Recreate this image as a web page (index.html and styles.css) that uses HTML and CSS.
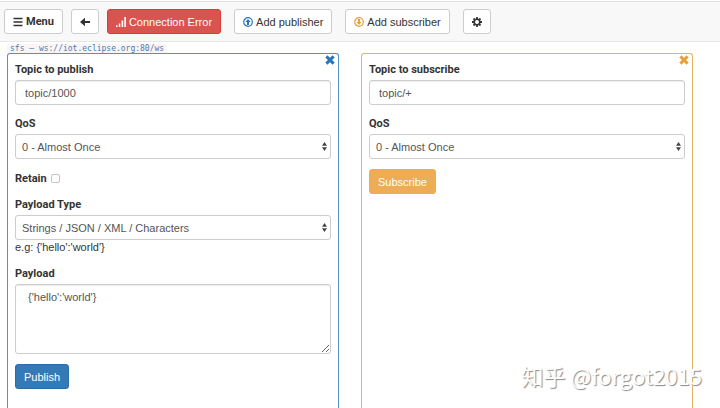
FILE: index.html
```html
<!DOCTYPE html>
<html lang="en">
<head>
  <meta charset="UTF-8" />
  <meta name="viewport" content="width=device-width, initial-scale=1.0" />
  <title>MQTT Client</title>
  <link rel="stylesheet" href="styles.css">
</head>
<body>
<nav class="toolbar">
  <button type="button" class="btn btn-bold">
    <svg class="icon" viewBox="0 0 10 10"><path d="M0.5 1.5h9M0.5 5h9M0.5 8.5h9" stroke="currentColor" stroke-width="1.5" /></svg>
    Menu
  </button>
  <button type="button" class="btn btn-back" aria-label="Back">
    <svg class="icon" viewBox="0 0 10 10"><path d="M0 5L5 0.8V3.9H10V6.1H5V9.2Z" fill="currentColor" /></svg>
  </button>
  <button type="button" class="btn btn-danger">
    <svg class="icon" viewBox="0 0 10 10"><path d="M0 8.2h1.5V10H0zM2.8 6.4h1.5V10H2.8zM5.6 3.6h1.6V10H5.6zM8.3 0H10v10H8.3z" fill="currentColor" /></svg>
    Connection Error
  </button>
  <button type="button" class="btn btn-add">
    <svg class="icon blue" viewBox="0 0 10 10"><circle cx="5" cy="5" r="4.3" fill="none" stroke="currentColor" stroke-width="1.2" /><path d="M5 1.9L7.6 5H6V7.9H4V5H2.4Z" fill="currentColor" /></svg>
    Add publisher
  </button>
  <button type="button" class="btn btn-add">
    <svg class="icon orange" viewBox="0 0 10 10"><circle cx="5" cy="5" r="4.3" fill="none" stroke="currentColor" stroke-width="1.2" /><path d="M5 8.1L7.6 5H6V2.1H4V5H2.4Z" fill="currentColor" /></svg>
    Add subscriber
  </button>
  <button type="button" class="btn btn-add" aria-label="Settings">
    <svg class="icon" viewBox="0 0 10 10"><circle cx="5" cy="5" r="2.8" fill="none" stroke="currentColor" stroke-width="1.6" /><path d="M5 0v2M5 8v2M0 5h2M8 5h2M1.5 1.5l1.3 1.3M7.2 7.2l1.3 1.3M8.5 1.5L7.2 2.8M2.8 7.2L1.5 8.5" stroke="currentColor" stroke-width="1.8" /></svg>
  </button>
</nav>

<div class="broker"><code>sfs – ws://iot.eclipse.org:80/ws</code></div>

<main class="panels">
  <!-- Publisher -->
  <form class="panel panel-pub">
    <button type="button" class="close blue" aria-label="Remove publisher">
      <svg class="icon" viewBox="0 0 10 10"><path d="M1.4 1.4L8.6 8.6M8.6 1.4L1.4 8.6" stroke="currentColor" stroke-width="3" /></svg>
    </button>
    <div class="group">
      <label for="pubTopic">Topic to publish</label>
      <input type="text" id="pubTopic" class="control" value="topic/1000" />
    </div>
    <div class="group">
      <label for="pubQos">QoS</label>
      <div class="select">
        <select id="pubQos" class="control">
          <option>0 - Almost Once</option>
          <option>1 - Atleast Once</option>
          <option>2 - Exactly Once</option>
        </select>
        <svg class="arrows" viewBox="0 0 5 9"><path d="M0 3.8L2.5 0L5 3.8ZM0 5.2L2.5 9L5 5.2Z" /></svg>
      </div>
    </div>
    <div class="check-row">
      <label for="retain">Retain</label>
      <input type="checkbox" id="retain" class="check" />
    </div>
    <div class="group">
      <label for="payloadType">Payload Type</label>
      <div class="select">
        <select id="payloadType" class="control">
          <option>Strings / JSON / XML / Characters</option>
        </select>
        <svg class="arrows" viewBox="0 0 5 9"><path d="M0 3.8L2.5 0L5 3.8ZM0 5.2L2.5 9L5 5.2Z" /></svg>
      </div>
      <div class="hint">e.g: {'hello':'world'}</div>
    </div>
    <div class="group">
      <label for="payload">Payload</label>
      <textarea id="payload" class="control">{'hello':'world'}</textarea>
    </div>
    <button type="button" class="btn btn-primary">Publish</button>
  </form>

  <!-- Subscriber -->
  <form class="panel panel-sub">
    <button type="button" class="close orange" aria-label="Remove subscriber">
      <svg class="icon" viewBox="0 0 10 10"><path d="M1.4 1.4L8.6 8.6M8.6 1.4L1.4 8.6" stroke="currentColor" stroke-width="3" /></svg>
    </button>
    <div class="group">
      <label for="subTopic">Topic to subscribe</label>
      <input type="text" id="subTopic" class="control" value="topic/+" />
    </div>
    <div class="group">
      <label for="subQos">QoS</label>
      <div class="select">
        <select id="subQos" class="control">
          <option>0 - Almost Once</option>
          <option>1 - Atleast Once</option>
          <option>2 - Exactly Once</option>
        </select>
        <svg class="arrows" viewBox="0 0 5 9"><path d="M0 3.8L2.5 0L5 3.8ZM0 5.2L2.5 9L5 5.2Z" /></svg>
      </div>
    </div>
    <button type="button" class="btn btn-warning">Subscribe</button>
  </form>
</main>

<div class="watermark">知乎 @forgot2015</div>
</body>
</html>
```
FILE: styles.css
```css
* { box-sizing: border-box; }
body { font: 11px/16px "Liberation Sans", Arial, sans-serif; color: #333; background: white; margin: 0; min-height: 100vh; display: flex; flex-direction: column; position: relative; }
button, input, select, textarea { font: inherit; }
.blue { color: #2a75b8; }
.orange { color: #e8a03c; }

/* toolbar */
.toolbar { display: flex; align-items: center; height: 41px; margin-top: 1px; padding: 0 4px; background: #f8f8f8; border-top: 1px solid #e0e0e0; border-bottom: 1px solid #e7e7e7; }
.btn { display: inline-flex; align-items: center; gap: 3px; height: 25px; padding: 0 8px; color: #333; background: white; border: 1px solid #ccc; border-radius: 3px; cursor: pointer; white-space: nowrap; }
.icon { width: 10px; height: 10px; display: block; flex: none; }
.btn-bold { font-family: Roboto, sans-serif; font-weight: bold; }
.btn-back { margin: 0 8px; }
.btn-add { margin-left: 13px; }
.btn-danger { color: white; background: #d9534f; border-color: #d43f3a; }
.btn-primary { color: white; background: #337ab7; border-color: #2e6da4; }
.btn-warning { color: white; background: #eeac55; border-color: #eeac55; }

.broker { height: 11px; padding-left: 7px; line-height: 10px; }
.broker code { display: inline-block; padding: 0 3px; font: 8px/10px "DejaVu Sans Mono", monospace; color: #4a7cb0; background: #f9f5f7; border-radius: 2px; }

/* panels */
.panels { flex: 1; display: grid; grid-template-columns: 1fr 1fr; gap: 22px; padding: 0 27px 0 7px; }
.panel { position: relative; padding: 7px; border: 1px solid; border-bottom: 0; border-radius: 3px 3px 0 0; }
.panel-pub { border-color: #5295bd; }
.panel-sub { border-color: #dfb765; }
.close { position: absolute; top: 1px; right: 3px; padding: 0; background: none; border: 0; cursor: pointer; }
.group { margin-bottom: 10px; }
label { display: block; margin-bottom: 2px; font-family: Roboto, sans-serif; font-weight: bold; line-height: 17px; }
.control { display: block; width: 100%; height: 25px; padding: 0 9px; color: #555; background: white; border: 1px solid #ccc; border-radius: 3px; box-shadow: inset 0 1px 1px rgba(0,0,0,0.07); }
.select { position: relative; }
select.control { appearance: none; padding: 0 6px; box-shadow: none; }
.arrows { position: absolute; right: 4px; top: 8px; width: 5px; height: 9px; fill: #444; pointer-events: none; }
textarea.control { height: 70px; padding: 4px 12px; resize: vertical; }
.check-row { display: flex; align-items: center; gap: 4px; margin: 11px 0 9px; }
.check-row label { margin: 0; }
.check { appearance: none; width: 9px; height: 9px; margin: 0; background: white; border: 1px solid #c4c4c4; border-radius: 2px; }
.check:checked { background: #337ab7; }
.hint { line-height: 15px; }

.watermark { position: absolute; right: 18px; bottom: 18px; font: 22px/30px "Noto Sans CJK SC", sans-serif; color: white; text-shadow: 1px 1px 1px #888; pointer-events: none; }
```
